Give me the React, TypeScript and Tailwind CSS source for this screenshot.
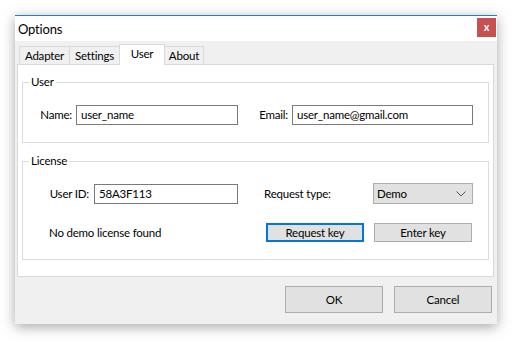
import React from 'react'

const font = { fontFamily: 'Lato, "Noto Sans", Arial, sans-serif' }

function Tab({ label, w, active, first }: { label: string; w: string; active?: boolean; first?: boolean }) {
  return (
    <div
      className={`${w} ${first ? '' : '-ml-px'} flex items-center justify-center border border-b-0 border-[#d9d9d9] ${
        active ? 'relative z-10 h-[21px] -mb-px bg-white pb-[2px]' : 'h-[18px] bg-[#f0f0f0]'
      }`}
    >
      {label}
    </div>
  )
}

function Group({ title, children, className }: { title: string; children: React.ReactNode; className?: string }) {
  return (
    <div className={`relative border border-[#dcdcdc] ${className ?? ''}`}>
      <span className="absolute -top-[9px] left-[6px] bg-white px-[2px] leading-[16px]">{title}</span>
      {children}
    </div>
  )
}

function TextBox({ value, w }: { value: string; w: string }) {
  return (
    <div className={`${w} h-[20px] border border-[#7a7a7a] bg-white px-[4px] flex items-center`}>{value}</div>
  )
}

function Button({ label, w, h, primary }: { label: string; w: string; h: string; primary?: boolean }) {
  return (
    <div
      className={`${w} ${h} flex items-center justify-center bg-[#e1e1e1] ${
        primary ? 'border-2 border-[#0078d7]' : 'border border-[#adadad]'
      }`}
    >
      {label}
    </div>
  )
}

export default function App() {
  return (
    <div className="w-[515px] h-[343px] bg-white pl-[15px] pt-[15px] text-[11.5px] tracking-[-0.2px] text-black" style={font}>
      <div className="w-[482px] h-[309px] flex flex-col bg-[#f0f0f0] border-t border-[#2c7ad6] shadow-[0_3px_12px_rgba(0,0,0,0.35)]">
        {/* Title bar */}
        <div className="h-[25px] bg-white flex items-start justify-between">
          <span className="ml-[3px] mt-[4px] text-[13px] leading-[18px]">Options</span>
          <div className="mt-[2px] mr-[1px] w-[19px] h-[19px] bg-[#c75050] flex items-center justify-center text-white font-bold text-[11px] leading-none pb-[2px]">
            x
          </div>
        </div>

        {/* Tabs */}
        <div className="pt-[3px] pl-[2px] pr-[3px]">
          <div className="h-[20px] pl-[2px] flex items-end">
            <Tab label="Adapter" w="w-[51px]" first />
            <Tab label="Settings" w="w-[51px]" />
            <Tab label="User" w="w-[46px]" active />
            <Tab label="About" w="w-[40px]" />
          </div>

          <div className="h-[213px] bg-white border border-[#d9d9d9] px-[4px] pt-[17px]">
            <Group title="User" className="h-[61px] pt-[22px]">
              <div className="flex items-center">
                <div className="w-[53px] pr-[4px] text-right">Name:</div>
                <TextBox value="user_name" w="w-[162px]" />
                <div className="w-[54px] pr-[4px] text-right">Email:</div>
                <TextBox value="user_name@gmail.com" w="w-[181px]" />
              </div>
            </Group>

            <Group title="License" className="mt-[18px] h-[99px] pt-[21px]">
              <div className="h-[21px] flex items-center">
                <div className="w-[71px] pr-[5px] text-right">User ID:</div>
                <TextBox value="58A3F113" w="w-[144px]" />
                <div className="w-[135px] pl-[26px]">Request type:</div>
                <div className="w-[100px] h-[21px] bg-[#e1e1e1] border border-[#adadad] flex items-center justify-between pl-[3px] pr-[6px]">
                  <span>Demo</span>
                  <svg width="10" height="6" viewBox="0 0 10 6" fill="none">
                    <path d="M0.5 0.5 L5 5 L9.5 0.5" stroke="#555" strokeWidth="1" />
                  </svg>
                </div>
              </div>
              <div className="mt-[19px] h-[19px] flex items-center">
                <div className="w-[243px] pl-[26px]">No demo license found</div>
                <Button label="Request key" w="w-[98px]" h="h-[19px]" primary />
                <div className="w-[10px]" />
                <Button label="Enter key" w="w-[98px]" h="h-[19px]" />
              </div>
            </Group>
          </div>
        </div>

        {/* Footer */}
        <div className="mt-[9px] flex justify-end pr-[5px] gap-[11px]">
          <Button label="OK" w="w-[98px]" h="h-[27px]" />
          <Button label="Cancel" w="w-[98px]" h="h-[27px]" />
        </div>
      </div>
    </div>
  )
}
